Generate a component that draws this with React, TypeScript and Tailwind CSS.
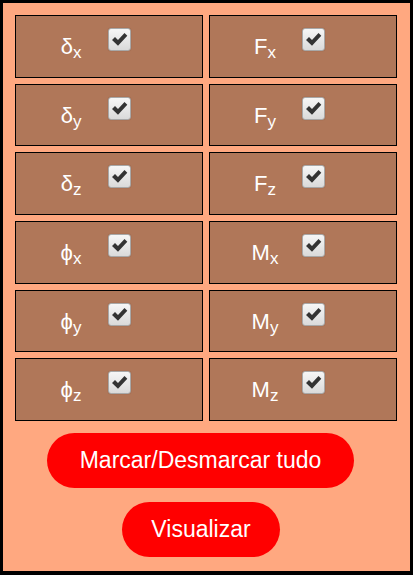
const items = [
  { s: "δ", sub: "x" },
  { s: "F", sub: "x" },
  { s: "δ", sub: "y" },
  { s: "F", sub: "y" },
  { s: "δ", sub: "z" },
  { s: "F", sub: "z" },
  { s: "ϕ", sub: "x" },
  { s: "M", sub: "x" },
  { s: "ϕ", sub: "y" },
  { s: "M", sub: "y" },
  { s: "ϕ", sub: "z" },
  { s: "M", sub: "z" },
];

const CheckBox = () => (
  <div className="mt-[12px] ml-[12px] w-[23px] h-[23px] rounded-[3px] border border-[#a8a8a8] bg-gradient-to-b from-[#f6f6f6] to-[#dadada] shadow-[0_0_1px_rgba(0,0,0,0.3)] flex items-center justify-center">
    <svg width="17" height="15" viewBox="0 0 17 15">
      <path d="M1 8 L4 5 L7 8 L13.5 1 L16.3 3.8 L7 13.8 Z" fill="#333" />
    </svg>
  </div>
);

export default function App() {
  return (
    <div className="w-[413px] h-[575px] bg-black pt-[3px] pl-[3px] pr-[3px] pb-[4px] font-['Liberation_Sans',sans-serif]">
      <div className="h-full bg-[#ffa880] pt-[12px] pl-[12px] pr-[13px]">
        <div className="grid grid-cols-[188px_188px] grid-rows-6 h-[406px] gap-x-[6px] gap-y-[6px]">
          {items.map((it, i) => (
            <div key={i} className="flex items-start bg-[#b07759] border border-black">
              <div className="ml-[30px] w-[50px] mt-[19px] flex justify-center text-white text-[22px] leading-[24px]">
                <span>{it.s}</span>
                <span className="relative top-[6px] text-[17px]">{it.sub}</span>
              </div>
              <CheckBox />
            </div>
          ))}
        </div>
        <div className="flex flex-col items-start">
          <button className="mt-[12px] ml-[32px] w-[307px] h-[55px] rounded-full bg-[#ff0000] text-white text-[23px]">
            Marcar/Desmarcar tudo
          </button>
          <button className="mt-[14px] ml-[107px] w-[158px] h-[55px] rounded-full bg-[#ff0000] text-white text-[23px]">
            Visualizar
          </button>
        </div>
      </div>
    </div>
  );
}
